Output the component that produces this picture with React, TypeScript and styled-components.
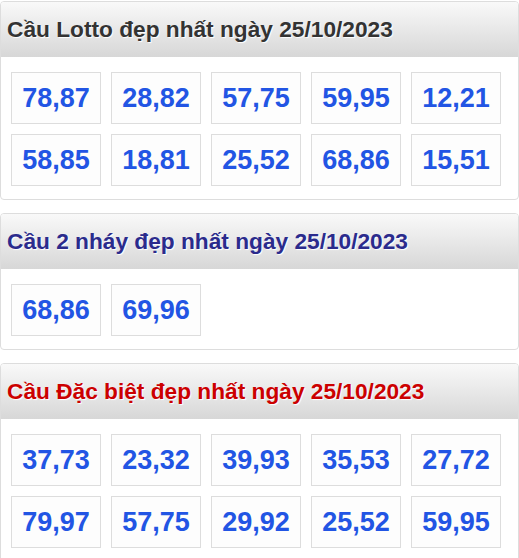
import React from 'react'
import styled, { createGlobalStyle } from 'styled-components'

const GlobalStyle = createGlobalStyle`
  body {
    margin: 0;
    background: #fff;
    font-family: Arial, "Liberation Sans", sans-serif;
  }
`

const Page = styled.div`
  display: flex;
  flex-direction: column;
  gap: 13px;
  padding-top: 1px;
`

const Panel = styled.div`
  border: 1px solid #ddd;
  border-radius: 4px;
  background: #fff;
  overflow: hidden;
`

const Header = styled.div<{ $color: string }>`
  height: 55px;
  display: flex;
  align-items: center;
  padding: 0 6px;
  background: linear-gradient(to bottom, #f9f9f9 0%, #d7d7d7 100%);
  color: ${(p) => p.$color};
  font-weight: bold;
  font-size: 22.7px;
  text-shadow: 1px 1px 1px #fff;
`

const Grid = styled.div`
  display: grid;
  grid-template-columns: repeat(5, 90px);
  gap: 10px;
  padding: 15px 10px 13px 10px;
`

const Cell = styled.div`
  height: 50px;
  border: 1px solid #ddd;
  background: #fdfdfd;
  display: flex;
  align-items: center;
  justify-content: center;
  color: #2255e4;
  font-weight: bold;
  font-size: 27px;
`

interface Section {
  title: string
  color: string
  numbers: string[]
}

const sections: Section[] = [
  {
    title: 'Cầu Lotto đẹp nhất ngày 25/10/2023',
    color: '#333',
    numbers: ['78,87', '28,82', '57,75', '59,95', '12,21', '58,85', '18,81', '25,52', '68,86', '15,51'],
  },
  {
    title: 'Cầu 2 nháy đẹp nhất ngày 25/10/2023',
    color: '#2b2b8c',
    numbers: ['68,86', '69,96'],
  },
  {
    title: 'Cầu Đặc biệt đẹp nhất ngày 25/10/2023',
    color: '#cc0000',
    numbers: ['37,73', '23,32', '39,93', '35,53', '27,72', '79,97', '57,75', '29,92', '25,52', '59,95'],
  },
]

const App: React.FC = () => {
  return (
    <>
      <GlobalStyle />
      <Page>
        {sections.map((s) => (
          <Panel key={s.title}>
            <Header $color={s.color}>{s.title}</Header>
            <Grid>
              {s.numbers.map((n, i) => (
                <Cell key={i}>{n}</Cell>
              ))}
            </Grid>
          </Panel>
        ))}
      </Page>
    </>
  )
}

export default App
